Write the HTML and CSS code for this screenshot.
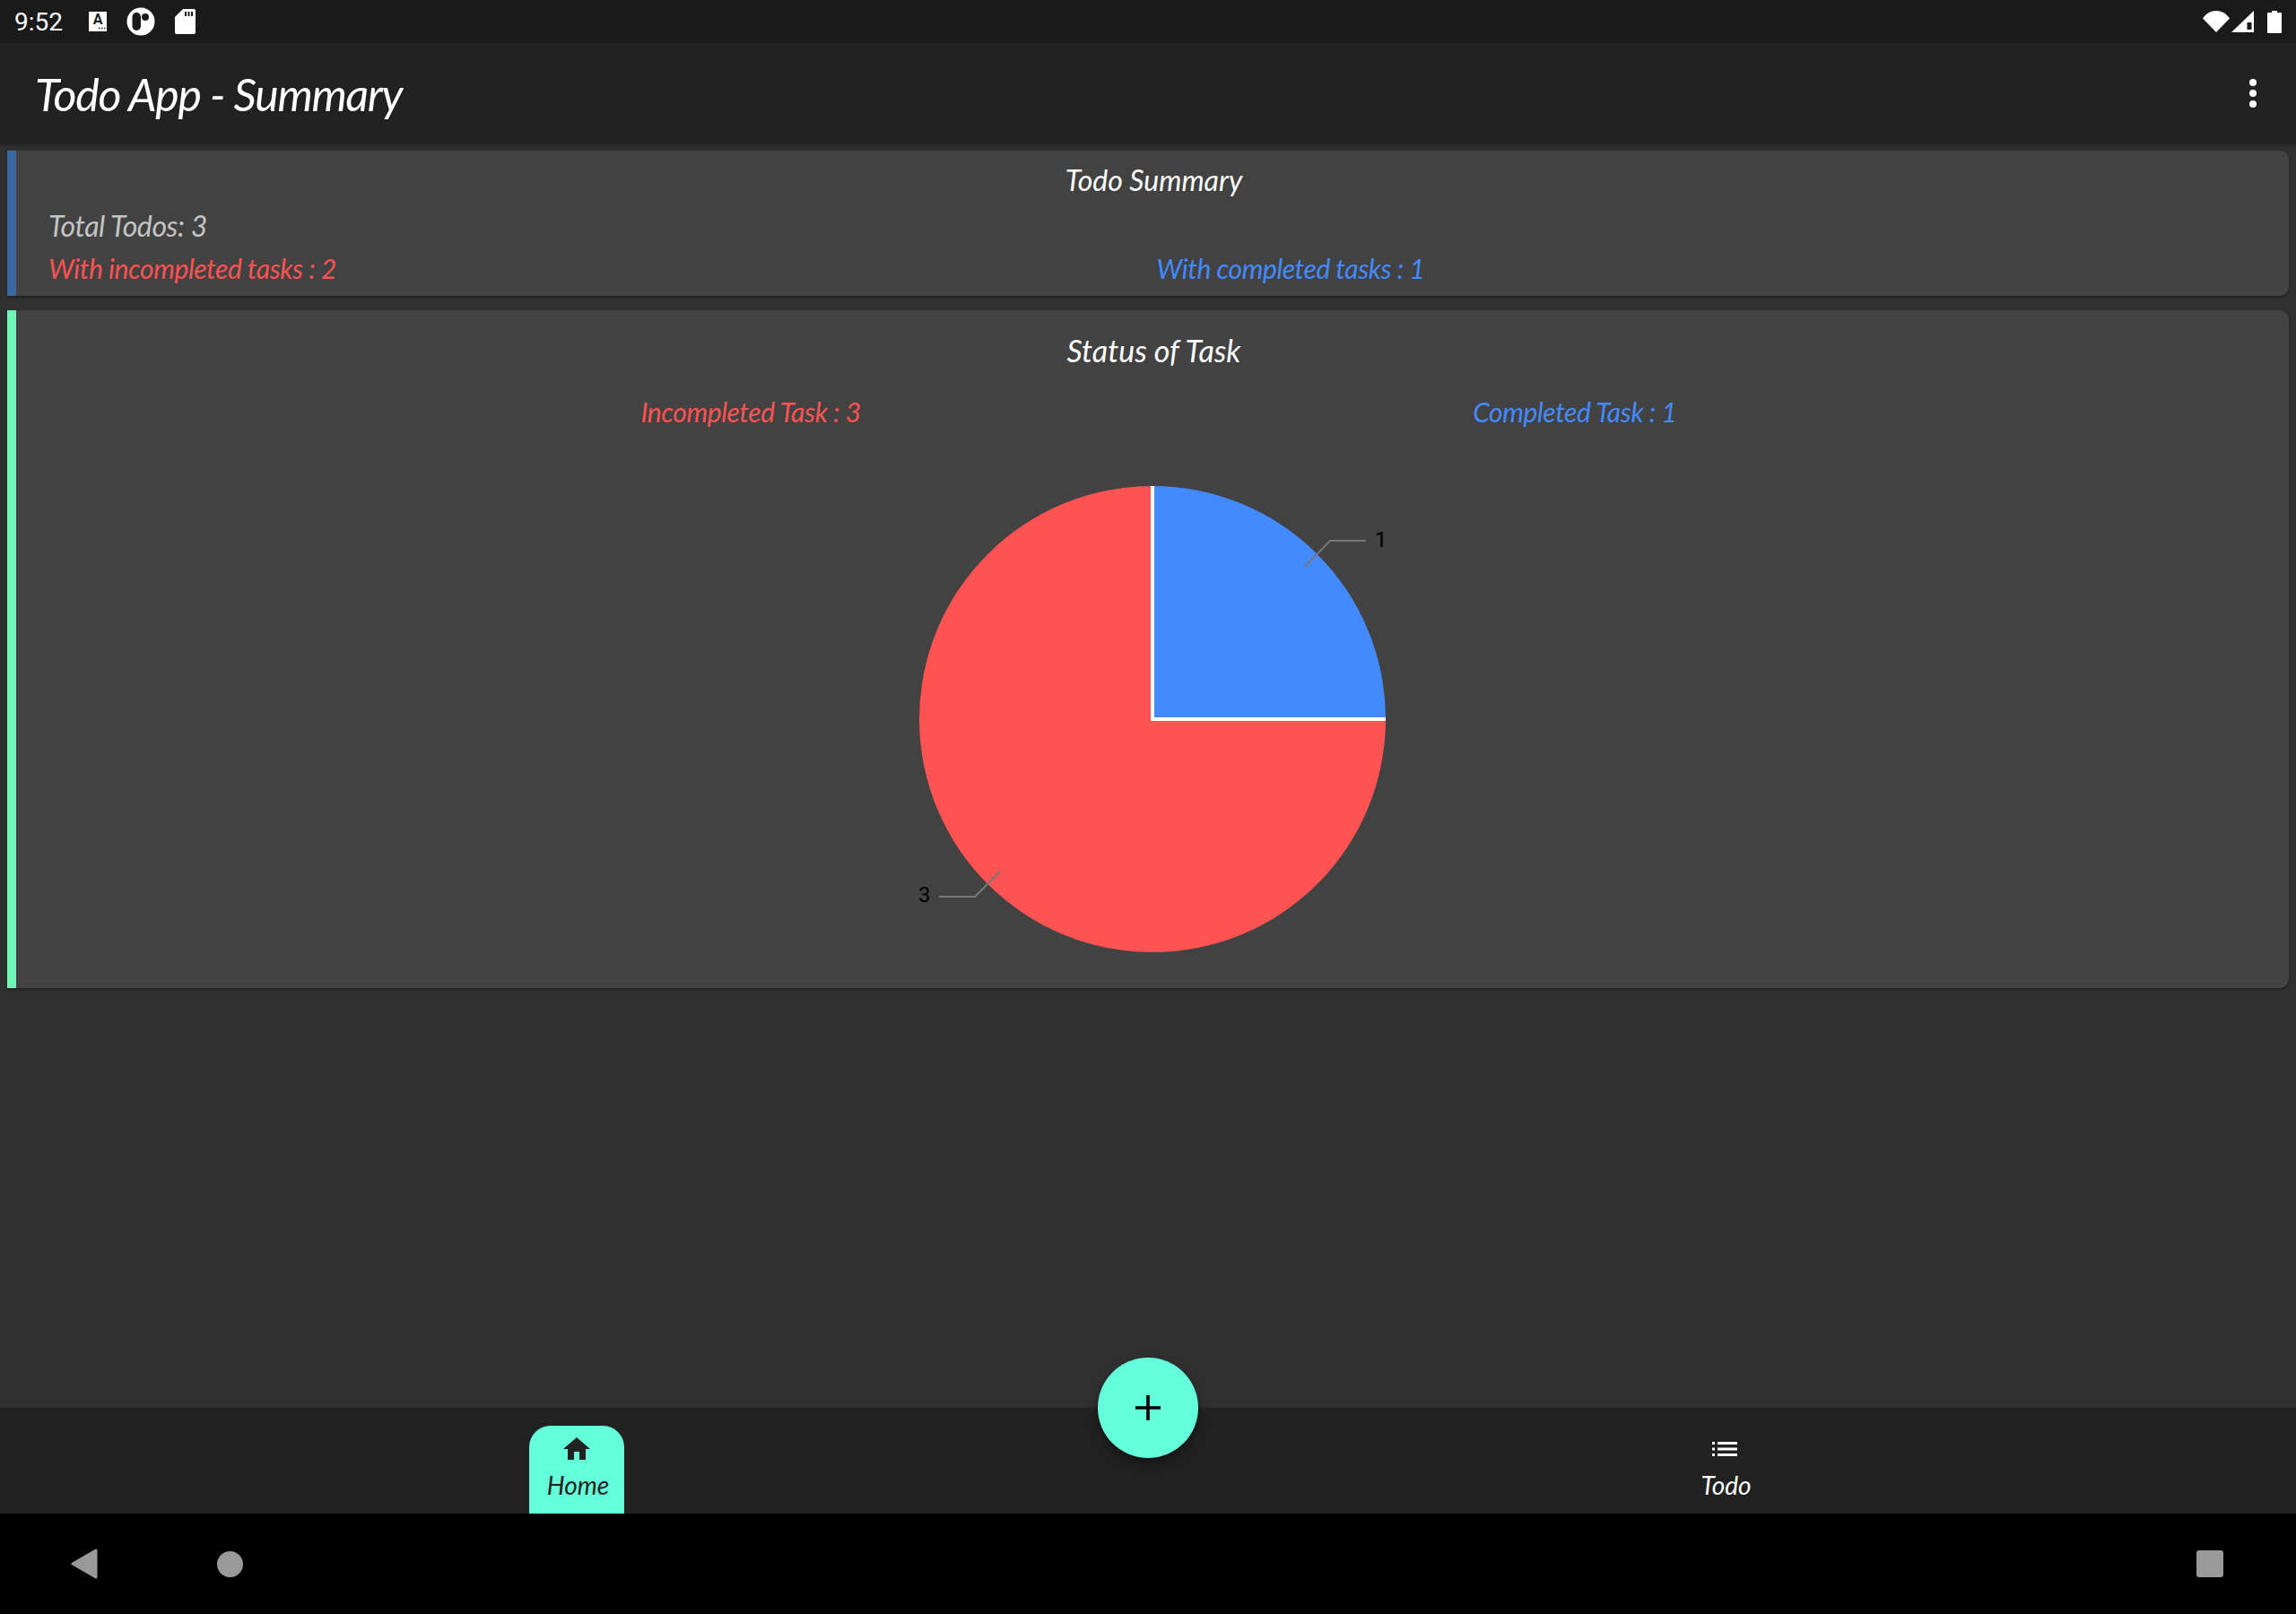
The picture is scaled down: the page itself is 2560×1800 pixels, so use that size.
FILE: index.html
```html
<!DOCTYPE html>
<html lang="en">
<head>
    <meta charset="UTF-8">
    <meta name="viewport" content="width=device-width, initial-scale=1.0">
    <title>Todo App - Summary</title>
    <link rel="stylesheet" href="styles.css">
</head>
<body>
    <div class="status-bar">
        <div class="status-left">
            <span class="clock">9:52</span>
            <svg class="ic-a" width="20" height="22" viewBox="0 0 20 22">
                <rect width="20" height="22" fill="#fff"/>
                <text x="10" y="14" text-anchor="middle" class="ic-a-letter">A</text>
                <path d="M11 18.5h1.6M14 18.5h1.6M17 18.5h1.4" stroke="#1a1a1a" stroke-width="1.6"/>
            </svg>
            <svg class="ic-circle" width="32" height="32" viewBox="0 0 32 32">
                <circle cx="16" cy="16" r="15.5" fill="#fff"/>
                <rect x="6.5" y="6" width="9.5" height="20" rx="4.7" fill="#1a1a1a"/>
                <circle cx="21" cy="11" r="4" fill="#1a1a1a"/>
            </svg>
            <svg class="ic-sd" width="23" height="28" viewBox="0 0 23 28">
                <path d="M9 0H21a2 2 0 0 1 2 2V26a2 2 0 0 1-2 2H2a2 2 0 0 1-2-2V9z" fill="#fff"/>
                <path d="M11 3h2v5h-2zM14.500 3h2v5h-2zM18 3h2v5h-2z" fill="#1a1a1a"/>
            </svg>
        </div>
        <div class="status-right">
            <svg width="30" height="24" viewBox="0 0 30 24">
                <path d="M0 8.500C8 -2.800 22 -2.800 30 8.500L15 24z" fill="#fff"/>
            </svg>
            <svg class="ic-signal" width="25" height="24" viewBox="0 0 25 24">
                <path d="M25 0V24H0z" fill="#fff"/>
                <path d="M17.500 13h5v8h-5z" fill="#1a1a1a"/>
            </svg>
            <svg class="ic-battery" width="16" height="25" viewBox="0 0 16 25">
                <path d="M5 0h6v2h4a1 1 0 0 1 1 1V24a1 1 0 0 1-1 1H1a1 1 0 0 1-1-1V3a1 1 0 0 1 1-1h4z" fill="#fff"/>
            </svg>
        </div>
    </div>

    <header class="app-bar">
        <h1 class="app-title">Todo App - Summary</h1>
        <svg width="8" height="32" viewBox="0 0 8 32">
            <circle cx="4" cy="4" r="4" fill="#fff"/>
            <circle cx="4" cy="16" r="4" fill="#fff"/>
            <circle cx="4" cy="28" r="4" fill="#fff"/>
        </svg>
    </header>

    <main class="content">
        <section class="card card-summary">
            <h2 class="card-title">Todo Summary</h2>
            <p class="total">Total Todos: 3</p>
            <div class="summary-row">
                <span class="txt-red">With incompleted tasks : 2</span>
                <span class="txt-blue">With completed tasks : 1</span>
            </div>
        </section>

        <section class="card card-status">
            <h2 class="card-title">Status of Task</h2>
            <div class="status-row">
                <span class="txt-red">Incompleted Task : 3</span>
                <span class="txt-blue">Completed Task : 1</span>
            </div>
            <svg class="pie" width="560" height="560" viewBox="0 0 560 560">
                <path d="M280 280V20A260 260 0 1 0 540 280z" fill="#ff5252"/>
                <path d="M280 280V20A260 260 0 0 1 540 280z" fill="#448aff"/>
                <path d="M280 20V280H540" fill="none" stroke="#fff" stroke-width="4"/>
                <path d="M450 110L478 81H518" fill="none" stroke="#777" stroke-width="2"/>
                <path d="M110 450L82 478H42" fill="none" stroke="#777" stroke-width="2"/>
                <text x="528" y="88" class="pie-label">1</text>
                <text x="19" y="484" class="pie-label">3</text>
            </svg>
        </section>
    </main>

    <nav class="bottom-bar">
        <div class="nav-half">
            <div class="nav-item nav-active">
                <svg width="30" height="25" viewBox="0 0 30 25">
                    <path d="M15 0L30 13H25V25H18V16H12V25H5V13H0z" fill="#212121"/>
                </svg>
                <span>Home</span>
            </div>
        </div>
        <div class="nav-half">
            <div class="nav-item">
                <svg class="ic-list" width="28" height="16" viewBox="0 0 28 16">
                    <path d="M0 0h3v3H0zM0 6.500h3v3H0zM0 13h3v3H0zM6 0h22v3H6zM6 6.500h22v3H6zM6 13h22v3H6z" fill="#fff"/>
                </svg>
                <span>Todo</span>
            </div>
        </div>
        <div class="fab">
            <svg width="28" height="28" viewBox="0 0 28 28">
                <path d="M12.200 0h3.600v12.200H28v3.600H15.800V28h-3.600V15.800H0v-3.600h12.200z" fill="#000"/>
            </svg>
        </div>
    </nav>

    <div class="system-nav">
        <div class="system-left">
            <svg width="30" height="34" viewBox="0 0 30 34">
                <path d="M28 2V32L2 17z" fill="#999" stroke="#999" stroke-width="3" stroke-linejoin="round"/>
            </svg>
            <div class="home-dot"></div>
        </div>
        <div class="recents"></div>
    </div>
</body>
</html>
```

FILE: styles.css
```css
*{
    box-sizing: border-box;
}

body{
    margin: 0;
    width: 2560px;
    height: 1800px;
    overflow: hidden;
    display: flex;
    flex-direction: column;
    background-color: #303030;
    font-family: "Lato", "Open Sans", sans-serif;
}

svg{
    display: block;
}

.status-bar{
    height: 48px;
    background-color: #1a1a1a;
    display: flex;
    justify-content: space-between;
    align-items: center;
    padding: 0 16px;
}

.status-left{
    display: flex;
    align-items: center;
}

.clock{
    color: #fff;
    font-family: "Roboto", sans-serif;
    font-size: 28px;
    width: 83px;
}

.ic-circle{
    margin-left: 22px;
    margin-right: 22px;
}

.ic-a-letter{
    font-family: "Roboto", sans-serif;
    font-weight: 700;
    font-size: 16px;
    fill: #1a1a1a;
}

.status-right{
    display: flex;
    align-items: center;
    gap: 3px;
}

.ic-signal{
    margin-left: -1px;
}

.ic-battery{
    margin-left: 12px;
}

.app-bar{
    height: 112px;
    background-color: #212121;
    display: flex;
    justify-content: space-between;
    align-items: center;
    padding: 0 44px 0 39px;
    box-shadow: 0 2px 4px rgba(0, 0, 0, 0.25);
    position: relative;
}

.app-title{
    margin: 2px 0 0;
    color: #fff;
    font-size: 50px;
    font-style: italic;
    font-weight: 400;
    letter-spacing: -1.3px;
}

.content{
    flex: 1;
    display: flex;
    flex-direction: column;
    gap: 16px;
    padding: 8px 8px 0;
}

.card{
    background-color: #424242;
    border-left: 10px solid;
    border-radius: 0 10px 10px 0;
    box-shadow: 0 2px 3px rgba(0, 0, 0, 0.3);
    color: #fff;
    font-size: 30px;
    font-style: italic;
    letter-spacing: -0.4px;
}

.card-title{
    margin: 0;
    padding-left: 3px;
    height: 40px;
    line-height: 40px;
    text-align: center;
    font-size: 32px;
    font-weight: 400;
    letter-spacing: 0;
}

.card-summary{
    height: 162px;
    border-left-color: #3869a5;
    padding: 13px 27px 0 36px;
}

.card-summary .card-title{
    margin-left: -36px;
    margin-right: -27px;
}

.total{
    margin: 11px 0 0;
    height: 40px;
    line-height: 40px;
    font-size: 32px;
    color: #c4c4c4;
}

.summary-row{
    margin-top: 7px;
    height: 40px;
    line-height: 40px;
    display: grid;
    grid-template-columns: 1fr 1fr;
}

.txt-red{
    color: #ff5252;
}

.txt-blue{
    color: #448aff;
}

.card-status{
    height: 756px;
    border-left-color: #6ef6b6;
    padding-top: 25px;
    display: flex;
    flex-direction: column;
    align-items: center;
}

.card-status .card-title{
    font-size: 34px;
}

.status-row{
    align-self: stretch;
    margin-top: 28px;
    padding-left: 14px;
    height: 40px;
    line-height: 40px;
    display: flex;
    justify-content: space-evenly;
}

.pie{
    margin-top: 43px;
}

.pie-label{
    font-family: "Roboto", sans-serif;
    font-style: normal;
    font-size: 24px;
    letter-spacing: 0;
    fill: #000;
}

.bottom-bar{
    height: 118px;
    background-color: #212121;
    display: flex;
    position: relative;
}

.nav-half{
    width: 50%;
    padding-left: 6px;
    display: flex;
    justify-content: center;
}

.nav-item{
    width: 106px;
    margin-top: 20px;
    display: flex;
    flex-direction: column;
    align-items: center;
    padding-top: 13px;
    gap: 11px;
    color: #fff;
    font-size: 28px;
    font-style: italic;
}

.nav-item span{
    margin-left: 3px;
}

.ic-list{
    margin: 5px 0 4px;
}

.nav-active{
    background-color: #64ffda;
    border-radius: 24px 24px 0 0;
    color: #212121;
}

.fab{
    position: absolute;
    left: 1224px;
    top: -56px;
    width: 112px;
    height: 112px;
    border-radius: 50%;
    background-color: #64ffda;
    box-shadow: 0 6px 12px rgba(0, 0, 0, 0.4);
    display: flex;
    align-items: center;
    justify-content: center;
}

.system-nav{
    height: 112px;
    background-color: #000;
    display: flex;
    justify-content: space-between;
    align-items: center;
    padding: 0 81px 0 79px;
}

.system-left{
    display: flex;
    align-items: center;
    gap: 133px;
}

.home-dot{
    width: 29px;
    height: 29px;
    border-radius: 50%;
    background-color: #999;
}

.recents{
    width: 30px;
    height: 30px;
    border-radius: 3px;
    background-color: #999;
}
```
